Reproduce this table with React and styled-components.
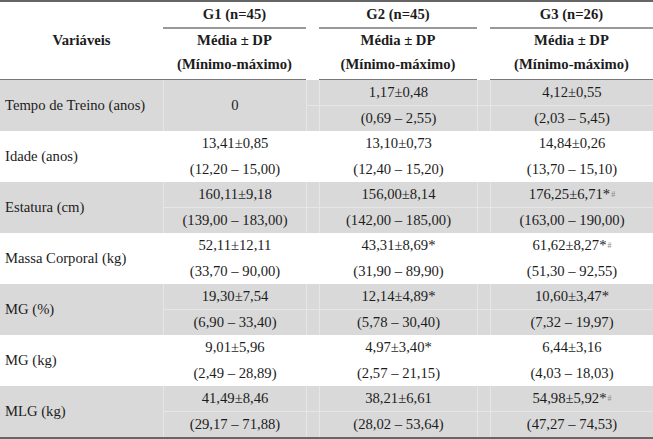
import styled, { createGlobalStyle } from "styled-components";

const GlobalStyle = createGlobalStyle`
  body {
    margin: 0;
    background: #ffffff;
  }
`;

const Table = styled.div`
  width: 653px;
  font-family: "Liberation Serif", "Times New Roman", serif;
  font-size: 14.67px;
  color: #1c1c1c;
  border-top: 2px solid #666666;
  border-bottom: 2px solid #666666;
`;

const Header = styled.div`
  display: grid;
  grid-template-columns: 163px 143px 13px 158px 13px 163px;
  grid-template-rows: 27px 23px 28px;
`;

const HeadCell = styled.div`
  display: flex;
  align-items: center;
  justify-content: center;
  font-weight: bold;
  grid-column: ${(p) => p.$col};
  grid-row: ${(p) => p.$row || "auto"};
  border-bottom: ${(p) => (p.$line ? `${p.$line} solid ${p.$color}` : "none")};
  padding-bottom: ${(p) => p.$pb || 0}px;
`;

const Row = styled.div`
  display: grid;
  grid-template-columns: 163px 142px 12px 157px 12px 162px;
  grid-template-rows: 25px 25px;
  gap: 1px;
  background: ${(p) => (p.$shade ? "#e6e6e6" : "#ffffff")};
`;

const Cell = styled.div`
  display: flex;
  align-items: center;
  justify-content: ${(p) => (p.$left ? "flex-start" : "center")};
  padding-left: ${(p) => (p.$left ? "5px" : "0")};
  background: ${(p) => (p.$shade ? "#d9d9d9" : "#ffffff")};
  grid-column: ${(p) => p.$col};
  grid-row: ${(p) => p.$row || "auto"};
  white-space: nowrap;
`;

const Mark = styled.sup`
  font-size: 8px;
  color: #8a8a8a;
  vertical-align: 5px;
  margin-left: 1px;
`;

const rows = [
  { label: "Tempo de Treino (anos)", shade: true, g: [["0"], ["1,17±0,48", "(0,69 – 2,55)"], ["4,12±0,55", "(2,03 – 5,45)"]] },
  { label: "Idade (anos)", g: [["13,41±0,85", "(12,20 – 15,00)"], ["13,10±0,73", "(12,40 – 15,20)"], ["14,84±0,26", "(13,70 – 15,10)"]] },
  { label: "Estatura (cm)", shade: true, g: [["160,11±9,18", "(139,00 – 183,00)"], ["156,00±8,14", "(142,00 – 185,00)"], ["176,25±6,71*#", "(163,00 – 190,00)"]] },
  { label: "Massa Corporal (kg)", g: [["52,11±12,11", "(33,70 – 90,00)"], ["43,31±8,69*", "(31,90 – 89,90)"], ["61,62±8,27*#", "(51,30 – 92,55)"]] },
  { label: "MG (%)", shade: true, g: [["19,30±7,54", "(6,90 – 33,40)"], ["12,14±4,89*", "(5,78 – 30,40)"], ["10,60±3,47*", "(7,32 – 19,97)"]] },
  { label: "MG (kg)", g: [["9,01±5,96", "(2,49 – 28,89)"], ["4,97±3,40*", "(2,57 – 21,15)"], ["6,44±3,16", "(4,03 – 18,03)"]] },
  { label: "MLG (kg)", shade: true, g: [["41,49±8,46", "(29,17 – 71,88)"], ["38,21±6,61", "(28,02 – 53,64)"], ["54,98±5,92*#", "(47,27 – 74,53)"]] },
];

const groupCols = [2, 4, 6];

function Value({ text }) {
  if (text.endsWith("#")) {
    return (
      <>
        {text.slice(0, -1)}
        <Mark>#</Mark>
      </>
    );
  }
  return text;
}

function DataRow({ row }) {
  const s = row.shade;
  return (
    <Row $shade={s}>
      <Cell $left $shade={s} $col={1} $row="1 / 3">
        {row.label}
      </Cell>
      {row.g.map((vals, i) =>
        vals.length === 1 ? (
          <Cell key={i} $shade={s} $col={groupCols[i]} $row="1 / 3">
            {vals[0]}
          </Cell>
        ) : (
          vals.map((v, j) => (
            <Cell key={`${i}-${j}`} $shade={s} $col={groupCols[i]} $row={j + 1}>
              <Value text={v} />
            </Cell>
          ))
        )
      )}
      {[3, 5].map((c) =>
        [1, 2].map((r) => <Cell key={`sp${c}${r}`} $shade={s} $col={c} $row={r} />)
      )}
    </Row>
  );
}

export default function App() {
  return (
    <>
      <GlobalStyle />
      <Table>
        <Header>
          <HeadCell $col={1} $row="1 / 4" $line="1px" $color="#777777">
            Variáveis
          </HeadCell>
          {["G1 (n=45)", "G2 (n=45)", "G3 (n=26)"].map((t, i) => (
            <HeadCell key={t} $col={groupCols[i]} $row={1} $line="2px" $color="#999999">
              {t}
            </HeadCell>
          ))}
          {groupCols.map((c) => (
            <HeadCell key={`m${c}`} $col={c} $row={2}>
              Média ± DP
            </HeadCell>
          ))}
          {groupCols.map((c) => (
            <HeadCell key={`r${c}`} $col={c} $row={3} $line="1px" $color="#777777" $pb={2}>
              (Mínimo-máximo)
            </HeadCell>
          ))}
        </Header>
        {rows.map((r) => (
          <DataRow key={r.label} row={r} />
        ))}
      </Table>
    </>
  );
}
